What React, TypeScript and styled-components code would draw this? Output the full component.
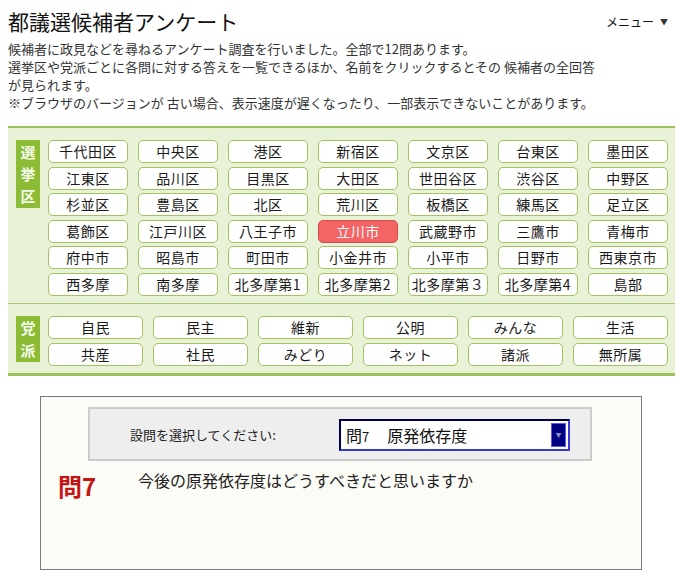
import React from "react";
import styled, { createGlobalStyle } from "styled-components";

const GlobalStyle = createGlobalStyle`
  html, body {
    margin: 0;
    padding: 0;
    background: #ffffff;
  }
  body {
    font-family: "Noto Sans CJK JP", "Noto Sans", sans-serif;
    color: #222222;
  }
`;

const Page = styled.div`
  padding: 6px 8px 0 8px;
  width: 667px;
`;

const Header = styled.header`
  display: flex;
  justify-content: space-between;
  align-items: flex-start;
`;

const Title = styled.h1`
  margin: 0;
  font-size: 21px;
  line-height: 30px;
  font-weight: 400;
  color: #111111;
`;

const Menu = styled.div`
  margin: 8px 7px 0 0;
  font-size: 12px;
  line-height: 16px;
  color: #111111;
  display: flex;
  align-items: center;
  gap: 6px;
  cursor: pointer;
`;

const MenuArrow = styled.span`
  font-size: 8px;
  color: #333333;
`;

const Intro = styled.p`
  margin: 4px 0 0 0;
  font-size: 13px;
  line-height: 18px;
  color: #333333;
  white-space: nowrap;
`;

const Panel = styled.nav`
  margin-top: 14px;
  background: #e7f2d6;
  border-top: 2px solid #9fc15a;
  border-bottom: 3px solid #9fc15a;
`;

const Section = styled.div<{ $divided?: boolean }>`
  display: flex;
  align-items: flex-start;
  gap: 8px;
  padding: 12px 8px 7px 8px;
  border-top: ${(p) => (p.$divided ? "1px solid #a9c970" : "none")};
`;

const SideLabel = styled.div`
  width: 24px;
  flex: none;
  background: #8cbb35;
  color: #f4fae8;
  display: flex;
  flex-direction: column;
  align-items: center;
  padding: 1px 0 1px 0;
`;

const SideChar = styled.span`
  font-size: 15px;
  line-height: 22px;
  font-weight: 700;
`;

const ButtonGrid = styled.div<{ $cols: number; $width: number }>`
  display: grid;
  grid-template-columns: repeat(${(p) => p.$cols}, ${(p) => p.$width}px);
  column-gap: 10px;
  row-gap: 3.6px;
`;

const ChoiceButton = styled.button<{ $active?: boolean }>`
  height: 23px;
  padding: 0;
  margin: 0;
  border: 1px solid ${(p) => (p.$active ? "#d24a4a" : "#a3c260")};
  border-radius: 5px;
  background: ${(p) => (p.$active ? "#f56464" : "#ffffff")};
  color: ${(p) => (p.$active ? "#ffffff" : "#1a1a1a")};
  font-family: "Noto Sans CJK JP", "Noto Sans", sans-serif;
  font-size: 14px;
  letter-spacing: 0.5px;
  line-height: 21px;
  text-align: center;
  white-space: nowrap;
  overflow: hidden;
  cursor: pointer;
`;

const QuestionBox = styled.section`
  margin: 20px 0 0 32px;
  width: 600px;
  height: 162px;
  border: 1px solid #7a7a7a;
  background: #fcfcf7;
  padding-top: 10px;
  box-sizing: content-box;
`;

const SelectBar = styled.div`
  margin-left: 47px;
  width: 504px;
  height: 54px;
  background: #eeeeee;
  border: 2px solid #cccccc;
  display: flex;
  align-items: center;
  padding-left: 40px;
  box-sizing: border-box;
`;

const SelectLabel = styled.span`
  font-size: 13px;
  color: #222222;
  width: 209px;
  flex: none;
  margin-top: 1px;
`;

const SelectBox = styled.div`
  width: 231px;
  height: 32px;
  box-sizing: border-box;
  border: 2px solid #000050;
  border-right-color: #3a3ad0;
  border-bottom-color: #3a3ad0;
  background: #ffffff;
  display: flex;
  align-items: center;
  justify-content: space-between;
  padding: 0 2px 0 5px;
  margin-top: 2px;
`;

const SelectText = styled.span`
  font-size: 16px;
  color: #111111;
  white-space: pre;
`;

const SelectNum = styled.span`
  font-size: 13px;
`;

const DropButton = styled.span`
  width: 15px;
  height: 24px;
  box-sizing: border-box;
  background: #000080;
  border: 1px solid #5a5af0;
  display: flex;
  align-items: center;
  justify-content: center;
  color: #9090c0;
  font-size: 6px;
`;

const QuestionRow = styled.div`
  display: flex;
  align-items: flex-start;
  padding: 8px 0 0 17px;
`;

const QuestionNo = styled.span`
  font-size: 24px;
  font-weight: 700;
  color: #c41414;
  width: 80px;
  line-height: 28px;
  margin-top: 3px;
  flex: none;
`;

const QuestionText = styled.span`
  font-size: 16px;
  line-height: 22px;
  color: #222222;
`;

const districts = [
  "千代田区", "中央区", "港区", "新宿区", "文京区", "台東区", "墨田区",
  "江東区", "品川区", "目黒区", "大田区", "世田谷区", "渋谷区", "中野区",
  "杉並区", "豊島区", "北区", "荒川区", "板橋区", "練馬区", "足立区",
  "葛飾区", "江戸川区", "八王子市", "立川市", "武蔵野市", "三鷹市", "青梅市",
  "府中市", "昭島市", "町田市", "小金井市", "小平市", "日野市", "西東京市",
  "西多摩", "南多摩", "北多摩第1", "北多摩第2", "北多摩第３", "北多摩第4", "島部",
];

const parties = [
  "自民", "民主", "維新", "公明", "みんな", "生活",
  "共産", "社民", "みどり", "ネット", "諸派", "無所属",
];

const selectedDistrict = "立川市";

const Side: React.FC<{ text: string }> = ({ text }) => (
  <SideLabel>
    {Array.from(text).map((c, i) => (
      <SideChar key={i}>{c}</SideChar>
    ))}
  </SideLabel>
);

export default function App() {
  return (
    <>
      <GlobalStyle />
      <Page>
        <Header>
          <Title>都議選候補者アンケート</Title>
          <Menu>
            メニュー<MenuArrow>▼</MenuArrow>
          </Menu>
        </Header>
        <Intro>
          候補者に政見などを尋ねるアンケート調査を行いました。全部で12問あります。
          <br />
          選挙区や党派ごとに各問に対する答えを一覧できるほか、名前をクリックするとその 候補者の全回答
          <br />
          が見られます。
          <br />
          ※ブラウザのバージョンが 古い場合、表示速度が遅くなったり、一部表示できないことがあります。
        </Intro>

        <Panel>
          <Section>
            <Side text="選挙区" />
            <ButtonGrid $cols={7} $width={80}>
              {districts.map((d) => (
                <ChoiceButton key={d} $active={d === selectedDistrict}>
                  {d}
                </ChoiceButton>
              ))}
            </ButtonGrid>
          </Section>
          <Section $divided>
            <Side text="党派" />
            <ButtonGrid $cols={6} $width={95}>
              {parties.map((p) => (
                <ChoiceButton key={p}>{p}</ChoiceButton>
              ))}
            </ButtonGrid>
          </Section>
        </Panel>

        <QuestionBox>
          <SelectBar>
            <SelectLabel>設問を選択してください:</SelectLabel>
            <SelectBox>
              <SelectText>
                問<SelectNum>7</SelectNum>{"     "}原発依存度
              </SelectText>
              <DropButton>▼</DropButton>
            </SelectBox>
          </SelectBar>
          <QuestionRow>
            <QuestionNo>問7</QuestionNo>
            <QuestionText>今後の原発依存度はどうすべきだと思いますか</QuestionText>
          </QuestionRow>
        </QuestionBox>
      </Page>
    </>
  );
}
